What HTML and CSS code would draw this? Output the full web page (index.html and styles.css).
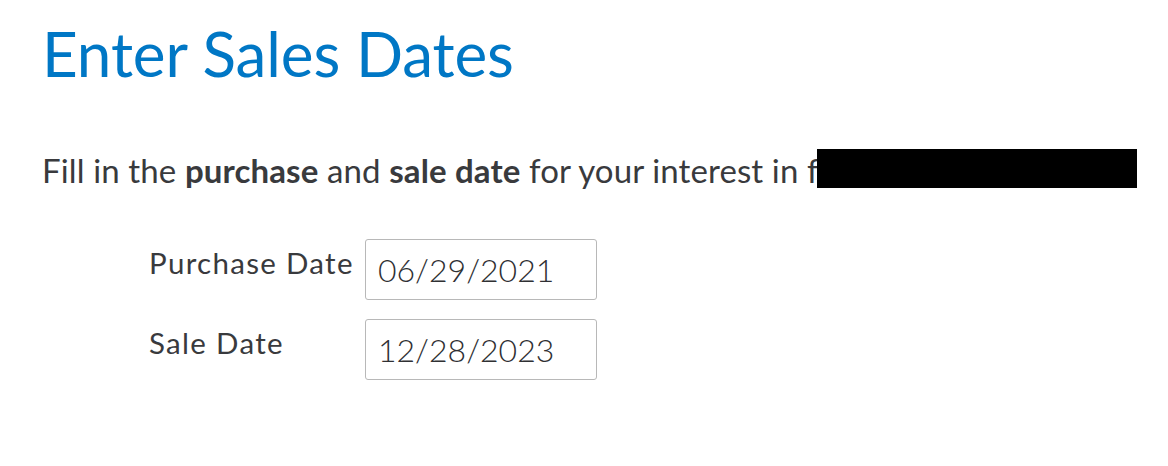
FILE: index.html
```html
<!DOCTYPE html>
<html>
<head>
<meta charset="utf-8">
<link rel="stylesheet" href="styles.css">
</head>
<body>
<main class="page">
  <h1 class="title">Enter Sales Dates</h1>
  <p class="intro">Fill in the <strong>purchase</strong> and <strong>sale date</strong> for your interest in f<span class="redact"></span></p>
  <div class="form">
    <div class="row">
      <label class="label">Purchase Date</label>
      <div class="field">06/29/2021</div>
    </div>
    <div class="row">
      <label class="label">Sale Date</label>
      <div class="field">12/28/2023</div>
    </div>
  </div>
</main>
</body>
</html>
```
FILE: styles.css
```css
html, body {
  margin: 0;
  padding: 0;
  background: #fff;
}
.page {
  padding: 18px 0 0 42px;
  font-family: Lato, "Noto Sans", sans-serif;
  color: #393a3d;
}
.title {
  margin: 0;
  font-weight: 400;
  font-size: 62px;
  line-height: 70px;
  letter-spacing: -0.1px;
  color: #0077c5;
}
.intro {
  position: relative;
  margin: 62px 0 0 0;
  font-size: 33px;
  line-height: 40px;
  letter-spacing: 0.12px;
}
.intro strong {
  font-weight: 700;
}
.redact {
  position: absolute;
  left: 775px;
  top: -1px;
  width: 320px;
  height: 39px;
  background: #000;
}
.form {
  margin: 49px 0 0 107px;
  display: flex;
  flex-direction: column;
  gap: 19px;
}
.row {
  display: flex;
  align-items: flex-start;
}
.label {
  width: 216px;
  font-size: 29.5px;
  line-height: 34px;
  letter-spacing: 1.3px;
  padding-top: 7px;
}
.field {
  box-sizing: border-box;
  width: 232px;
  height: 61px;
  border: 1.5px solid #b8b8b8;
  border-radius: 3px;
  padding: 10px 0 8px 12px;
  font-size: 32px;
  font-weight: 300;
  line-height: 40px;
  color: #2f3033;
}
```
